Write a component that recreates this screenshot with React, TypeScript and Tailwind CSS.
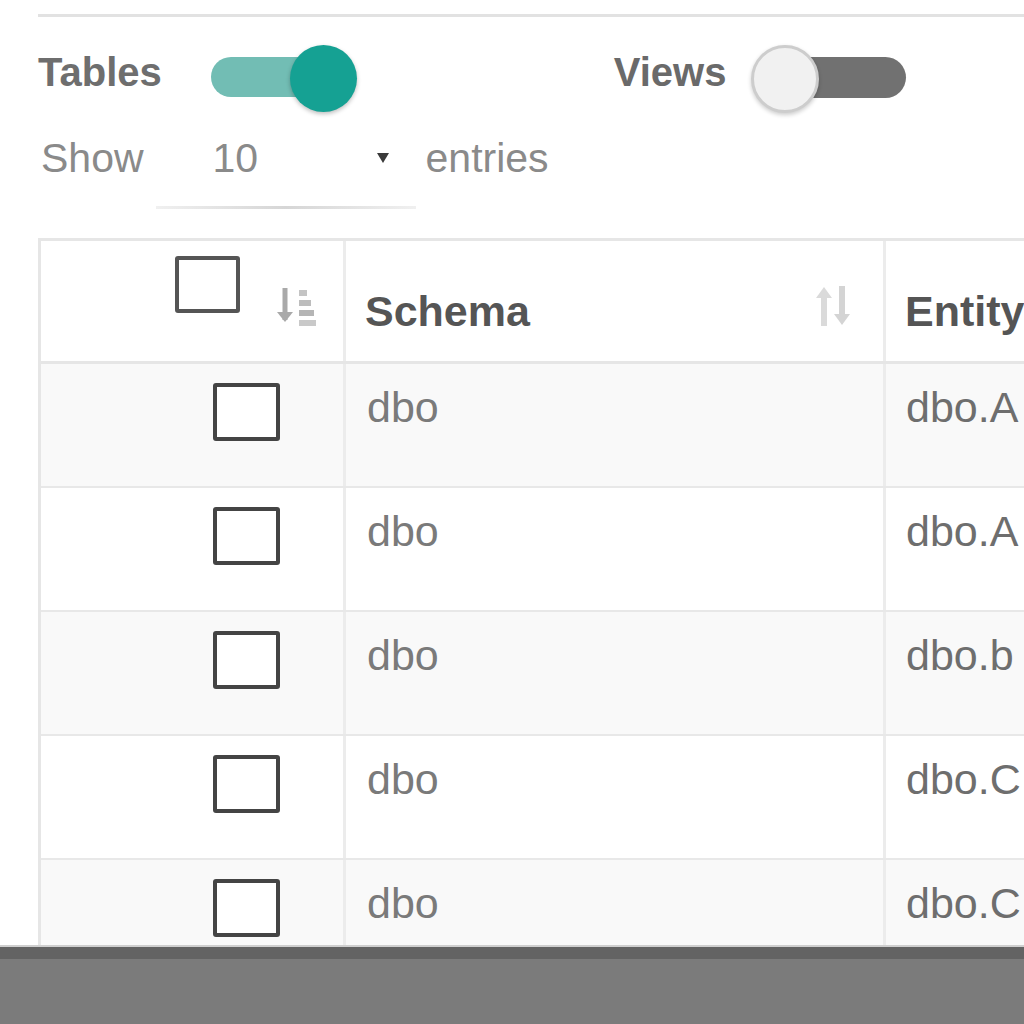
import React from "react";

type SwitchProps = { on: boolean };

const Switch: React.FC<SwitchProps> = ({ on }) => {
  if (on) {
    return (
      <div className="relative w-[146px] h-[67px] shrink-0">
        <div className="absolute left-0 top-[12px] w-[138px] h-[40px] rounded-full bg-[#72bdb4]" />
        <div className="absolute right-0 top-0 w-[67px] h-[67px] rounded-full bg-[#15a193] shadow-[0_2px_4px_rgba(0,0,0,0.25)]" />
      </div>
    );
  }
  return (
    <div className="relative w-[155px] h-[68px] shrink-0">
      <div className="absolute right-0 top-[12px] w-[143px] h-[41px] rounded-full bg-[#717171]" />
      <div className="absolute left-0 top-0 w-[68px] h-[68px] rounded-full bg-[#f1f1f1] border-[3px] border-[#cdcdcd] shadow-[0_2px_4px_rgba(0,0,0,0.2)]" />
    </div>
  );
};

const Checkbox: React.FC<{ header?: boolean }> = ({ header }) => (
  <div
    className={
      header
        ? "w-[65px] h-[57px] rounded-[3px] border-[4px] border-[#555] bg-white"
        : "w-[67px] h-[58px] rounded-[3px] border-[4px] border-[#444] bg-white"
    }
  />
);

// sort icon for the checkbox column (arrow + bars)
const SortAmountIcon = () => (
  <svg width="42" height="44" viewBox="0 0 42 44" fill="none">
    <path d="M10 4v32" stroke="#a9a9a9" strokeWidth="5" />
    <path d="M2 28l8 10 8-10z" fill="#a9a9a9" />
    <rect x="24" y="6" width="8" height="6" fill="#c4c4c4" />
    <rect x="24" y="16" width="12" height="6" fill="#bdbdbd" />
    <rect x="24" y="26" width="15" height="6" fill="#b5b5b5" />
    <rect x="24" y="36" width="17" height="6" fill="#c9c9c9" />
  </svg>
);

// faded up/down arrows
const SortBothIcon = () => (
  <svg width="38" height="44" viewBox="0 0 38 44" fill="none">
    <path d="M10 8v34" stroke="#dadada" strokeWidth="6" />
    <path d="M2 14l8-11 8 11z" fill="#dadada" />
    <path d="M28 2v34" stroke="#d4d4d4" strokeWidth="6" />
    <path d="M20 30l8 11 8-11z" fill="#d4d4d4" />
  </svg>
);

const rows = [
  { schema: "dbo", entity: "dbo.A" },
  { schema: "dbo", entity: "dbo.A" },
  { schema: "dbo", entity: "dbo.b" },
  { schema: "dbo", entity: "dbo.C" },
  { schema: "dbo", entity: "dbo.C" },
];

const App: React.FC = () => {
  return (
    <div
      className="w-[1024px] h-[1024px] overflow-hidden bg-white flex flex-col"
      style={{ fontFamily: '"Liberation Sans", Arial, sans-serif' }}
    >
      <div className="h-[945px] overflow-hidden pl-[38px] flex flex-col">
        <div className="h-[14px] shrink-0" />
        <div className="h-[3px] shrink-0 bg-[#e2e2e2]" />

        {/* toggles */}
        <div className="flex items-start shrink-0">
          <span className="mt-[31px] text-[40px] leading-[48px] font-bold text-[#6e6e6e] whitespace-nowrap">Tables</span>
          <div className="ml-[49px] mt-[28px]">
            <Switch on />
          </div>
          <span className="ml-[257px] mt-[31px] text-[40px] leading-[48px] font-bold text-[#6a6a6a] whitespace-nowrap">Views</span>
          <div className="ml-[25px] mt-[28px]">
            <Switch on={false} />
          </div>
        </div>

        {/* show entries */}
        <div className="flex items-start mt-[21px] shrink-0">
          <span className="ml-[3px] text-[41px] leading-[48px] text-[#8a8a8a]">Show</span>
          <div className="ml-[12px] w-[260px] flex flex-col">
            <div className="flex items-center h-[48px] pl-[57px]">
              <span className="text-[41px] leading-[48px] text-[#8a8a8a]">10</span>
              <svg className="ml-auto mr-[27px]" width="12" height="10" viewBox="0 0 12 10">
                <polygon points="0,0 12,0 6,10" fill="#3a3a3a" />
              </svg>
            </div>
            <div className="mt-[24px] h-[3px] bg-linear-to-r from-[#f0f0f0] via-[#d6d6d6] to-[#f0f0f0]" />
          </div>
          <span className="ml-[10px] text-[41px] leading-[48px] text-[#8a8a8a]">entries</span>
        </div>

        {/* table */}
        <div className="mt-[29px] w-[1200px] border-t-[3px] border-l-[3px] border-[#e6e6e6] shrink-0">
          <div className="flex h-[123px] border-b-[3px] border-[#e6e6e6] bg-white">
            <div className="w-[305px] shrink-0 border-r-[3px] border-[#ececec] flex justify-end items-start pr-[26px] pt-[15px]">
              <Checkbox header />
              <div className="ml-[35px] mt-[28px]">
                <SortAmountIcon />
              </div>
            </div>
            <div className="w-[540px] shrink-0 border-r-[3px] border-[#ececec] flex items-start justify-between pl-[19px] pr-[31px]">
              <span className="mt-[44px] text-[43px] leading-[52px] font-bold text-[#555]">Schema</span>
              <div className="mt-[43px]">
                <SortBothIcon />
              </div>
            </div>
            <div className="flex-1 pl-[19px]">
              <span className="block mt-[44px] text-[43px] leading-[52px] font-bold text-[#555] whitespace-nowrap">Entity</span>
            </div>
          </div>

          {rows.map((r, i) => (
            <div
              key={i}
              className={
                "flex h-[124px] border-b-[2px] border-[#e8e8e8] " +
                (i % 2 === 0 ? "bg-[#f9f9f9]" : "bg-white")
              }
            >
              <div className="w-[305px] shrink-0 border-r-[3px] border-[#ececec] flex justify-end items-start pr-[63px] pt-[19px]">
                <Checkbox />
              </div>
              <div className="w-[540px] shrink-0 border-r-[3px] border-[#ececec] pl-[21px] pt-[17px]">
                <span className="text-[43px] leading-[52px] text-[#7a7a7a]">{r.schema}</span>
              </div>
              <div className="flex-1 pl-[20px] pt-[17px]">
                <span className="text-[43px] leading-[52px] text-[#6e6e6e] whitespace-nowrap">{r.entity}</span>
              </div>
            </div>
          ))}
        </div>
      </div>

      {/* bottom bar */}
      <div className="flex-1 flex flex-col border-t-[2px] border-[#cfcfcf]">
        <div className="h-[12px] bg-[#636363]" />
        <div className="flex-1 bg-[#7b7b7b]" />
      </div>
    </div>
  );
};

export default App;
